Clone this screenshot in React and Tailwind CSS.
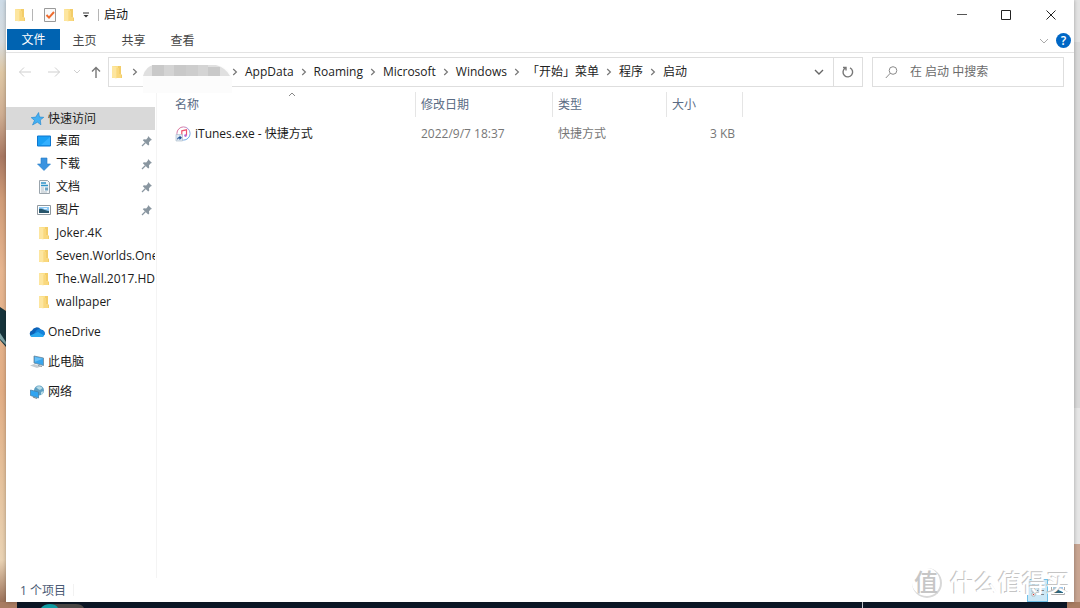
import React from 'react';

const Chevron = ({ className = '' }) => (
  <svg viewBox="0 0 6 8" className={`w-[6px] h-2 shrink-0 ${className}`} fill="none" stroke="#777" strokeWidth="1.2">
    <path d="M1.2 1l3.2 3-3.2 3" />
  </svg>
);

const Folder = () => (
  <svg viewBox="0 0 16 16" className="size-4 shrink-0">
    <path d="M3 2h8l1 1v11H3z" fill="#fbdf87" />
    <path d="M9 2h3v8l1 1v3H9z" fill="#f3cd69" />
    <path d="M3 2l4.500 1.200V14.500L3 13.500z" fill="#fde6a0" />
    <path d="M7.500 4H10v6h2v4H7.500z" fill="#f9d87e" />
  </svg>
);

const Star = () => (
  <svg viewBox="0 0 16 16" className="size-4 shrink-0">
    <path d="M9.600 1.500l.9 4.500 4.300.3-3.500 2.700.6 4.800-3.500-2.600L3.500 14l2-4.600L2.200 6.600l4.500-.5z" fill="#45b0f2" stroke="#1f83cc" strokeWidth=".6" />
  </svg>
);

const Desktop = () => (
  <svg viewBox="0 0 16 16" className="size-4 shrink-0">
    <path d="M1.500 3h13v10h-13z" fill="#1aa0f5" stroke="#0f77cf" />
    <path d="M14 4v8H5z" fill="#34b0ff" />
  </svg>
);

const Download = () => (
  <svg viewBox="0 0 16 16" className="size-4 shrink-0">
    <path d="M5 2h6v6h3.5L8 14.5 1.5 8H5z" fill="#3a93e0" stroke="#2478c4" strokeWidth=".6" />
  </svg>
);

const Document = () => (
  <svg viewBox="0 0 16 16" className="size-4 shrink-0">
    <path d="M3.500 1.500h8l2 2v11h-10z" fill="#f3f6f8" stroke="#9aa4ac" />
    <path d="M5 4h5M5 6.500h7" stroke="#2f93c8" strokeWidth="1.400" />
    <path d="M5 9h3M5 11h3M5 13h6" stroke="#b4bfc7" />
    <path d="M9 8.500h3v3H9z" fill="#6fa5c4" />
  </svg>
);

const Picture = () => (
  <svg viewBox="0 0 16 16" className="size-4 shrink-0">
    <path d="M1.500 3.500h13v9h-13z" fill="#fff" stroke="#8f989f" />
    <path d="M3 5h10v6H3z" fill="#8cc8f4" />
    <path d="M3 7c3-1 4 1 10 2v2H3z" fill="#28566c" />
    <path d="M7 6h4v1H8z" fill="#e9f6ff" />
  </svg>
);

const Cloud = () => (
  <svg viewBox="0 0 16 16" className="size-4 shrink-0">
    <path d="M3.600 13A3.300 3.300 0 0 1 3 6.600 5 5 0 0 1 11.800 5.500 4 4 0 0 1 15.500 11z" fill="#0c62b8" />
    <path d="M7 6.800a4 4 0 0 1 5.600-.8 3.600 3.600 0 0 1 .4 7H3.500z" fill="#1484dc" />
    <path d="M1 11.500L9 8l6 3.500a2.500 2.500 0 0 1-2.300 1.500H3.600A3 3 0 0 1 1 11.500z" fill="#29a8ef" />
  </svg>
);

const Computer = () => (
  <svg viewBox="0 0 16 16" className="size-4 shrink-0">
    <path d="M5 2l9.500 2v7.500L5 9z" fill="#3aa5ec" stroke="#6c8798" strokeWidth=".8" />
    <path d="M6 3l8 1.800-8 3z" fill="#69c1f8" />
    <path d="M1 11.500l4-1.500 7 2.500-4 1.500z" fill="#c5ccd1" />
    <path d="M9 11.500l4 1" stroke="#8a959c" />
  </svg>
);

const Network = () => (
  <svg viewBox="0 0 16 16" className="size-4 shrink-0">
    <circle cx="10" cy="6.500" r="5" fill="#5d9fc2" />
    <path d="M7 3c2-1.500 5-1 6.500 1L11 6 9 5zM12 8l2.500-1c0 2-1 3.500-2.500 4.200z" fill="#b7dbe6" />
    <path d="M1.500 6l8 2v6l-8-2.500z" fill="#31a5f1" stroke="#4382ad" strokeWidth=".8" />
    <path d="M4 13l4 1.500" stroke="#7a8a94" strokeWidth="1.200" />
  </svg>
);

const Pin = () => (
  <svg viewBox="0 0 12 12" className="size-3 shrink-0">
    <path d="M7 1l4 4-1.200.3-1.800 2 .2 2.500-1 .8L1.800 5.200l1-1 2.400.2 1.700-1.900z" fill="#8996a0" />
    <path d="M4.500 7.500L1 11" stroke="#8996a0" strokeWidth="1.200" />
  </svg>
);

const ITunes = () => (
  <svg viewBox="0 0 16 16" className="size-4 shrink-0">
    <defs>
      <linearGradient id="ring" x1="0" y1="0" x2="1" y2="1">
        <stop offset="0" stopColor="#f0647e" />
        <stop offset=".5" stopColor="#a99be0" />
        <stop offset="1" stopColor="#4fb4ea" />
      </linearGradient>
    </defs>
    <circle cx="8.500" cy="7.500" r="6.600" fill="#fff" stroke="url(#ring)" />
    <path d="M6.800 10.500V4.800l4.700-1v5.700" fill="none" stroke="#ee5570" strokeWidth="1.200" />
    <circle cx="10.500" cy="9.600" r="1.300" fill="#b56bd8" />
    <path d="M1 8.500h6.500v6.500H1z" fill="#dfe9f2" stroke="#a9bac8" strokeWidth=".6" />
    <path d="M2 14c0-2 1-3 2.500-3V9.500L7 11.800 4.500 14v-1.400C3.500 12.500 2.800 13 2 14z" fill="#1d4f96" />
  </svg>
);

const quickLinks = [
  { icon: Desktop, label: '桌面', pinned: true },
  { icon: Download, label: '下载', pinned: true },
  { icon: Document, label: '文档', pinned: true },
  { icon: Picture, label: '图片', pinned: true },
  { icon: Folder, label: 'Joker.4K' },
  { icon: Folder, label: 'Seven.Worlds.One' },
  { icon: Folder, label: 'The.Wall.2017.HD' },
  { icon: Folder, label: 'wallpaper' },
];

const places = [
  { icon: Cloud, label: 'OneDrive' },
  { icon: Computer, label: '此电脑' },
  { icon: Network, label: '网络' },
];

const crumbs = ['AppData', 'Roaming', 'Microsoft', 'Windows', '「开始」菜单', '程序', '启动'];

const TitleBar = () => (
  <header className="flex h-[29px] items-center pl-[6px]">
    <Folder />
    <span className="ml-1 h-3 w-px bg-[#b5b5b5]" />
    <button aria-label="属性" className="ml-[10px]">
      <svg viewBox="0 0 14 16" className="h-4 w-[14px]">
        <path d="M1.500 1.500h11v13h-11z" fill="#fafafa" stroke="#9a9a9a" />
        <path d="M3.500 8l2.500 2.600L11 5" fill="none" stroke="#ee6b2e" strokeWidth="2" />
      </svg>
    </button>
    <button aria-label="新建文件夹" className="ml-1"><Folder /></button>
    <button aria-label="自定义快速访问工具栏" className="ml-[5px]">
      <svg viewBox="0 0 8 8" className="size-2">
        <path d="M1 2h6" stroke="#333" />
        <path d="M1.500 4h5L4 6.500z" fill="#333" />
      </svg>
    </button>
    <span className="ml-2 h-3 w-px bg-[#b5b5b5]" />
    <h1 className="ml-[5px] flex-1 text-[#111]">启动</h1>
    <div className="flex h-full">
      <button aria-label="最小化" className="flex w-11 items-center justify-center">
        <svg viewBox="0 0 10 10" className="size-[10px]"><path d="M0 4.500h10" stroke="#555" /></svg>
      </button>
      <button aria-label="最大化" className="flex w-11 items-center justify-center">
        <svg viewBox="0 0 10 10" className="size-[10px]"><path d="M.5.5h9v9h-9z" fill="none" stroke="#222" /></svg>
      </button>
      <button aria-label="关闭" className="flex w-[46px] items-center justify-center">
        <svg viewBox="0 0 10 10" className="size-[10px]"><path d="M.5.5l9 9m0-9l-9 9" stroke="#222" /></svg>
      </button>
    </div>
  </header>
);

const Ribbon = () => (
  <nav className="flex h-6 items-start border-b border-[#e3e3e3] pl-px">
    <button className="h-[21px] w-[53px] bg-[#0063b1] pt-px text-white">文件</button>
    <button className="h-[23px] w-[49px] text-[#444]">主页</button>
    <button className="h-[23px] w-[49px] text-[#444]">共享</button>
    <button className="h-[23px] w-[49px] text-[#444]">查看</button>
    <button aria-label="展开功能区" className="ml-auto flex h-[23px] items-center">
      <svg viewBox="0 0 10 6" className="h-[6px] w-[10px]" fill="none" stroke="#aaa"><path d="M1 1l4 4 4-4" /></svg>
    </button>
    <button aria-label="帮助" className="ml-[7px] mr-[3px] flex h-[23px] items-center">
      <span className="flex size-[15px] items-center justify-center rounded-full bg-[#0067c5] text-[12px] leading-none font-semibold text-white">?</span>
    </button>
  </nav>
);

const AddressRow = () => (
  <div className="mt-1 flex h-[30px] items-center pr-[10px]">
    <button aria-label="后退" className="ml-3">
      <svg viewBox="0 0 14 12" className="h-3 w-[14px]" fill="none" stroke="#cfcfcf"><path d="M13 6H1.500M6 1.500L1.500 6 6 10.500" /></svg>
    </button>
    <button aria-label="前进" className="ml-[15px]">
      <svg viewBox="0 0 14 12" className="h-3 w-[14px]" fill="none" stroke="#cfcfcf"><path d="M1 6h11.500M8 1.500L12.500 6 8 10.500" /></svg>
    </button>
    <button aria-label="最近浏览的位置" className="ml-3">
      <svg viewBox="0 0 8 6" className="h-[6px] w-2" fill="none" stroke="#cfcfcf"><path d="M1 1l3 3 3-3" /></svg>
    </button>
    <button aria-label="上移" className="ml-[10px]">
      <svg viewBox="0 0 10 12" className="h-3 w-[10px]" fill="none" stroke="#777" strokeWidth="1.400"><path d="M5 12V1.500M1 5.500l4-4 4 4" /></svg>
    </button>
    <div className="ml-[7px] flex h-full flex-1 items-center border border-[#dedede] text-[#222]">
      <Folder />
      <Chevron className="ml-[7px]" />
      <svg viewBox="0 0 90 36" className="ml-1 h-9 w-[90px] shrink-0 translate-y-[6px]">
        <path d="M1 16Q3 6 12 5h64q12 3 14 14v14H1z" fill="#fcfcfc" />
        <path d="M1 16Q4 6 12 5h62q10 3 14 11H1z" fill="#e0e0e0" />
        <path d="M10 5h12v11H10zM32 5h12v11H32zM66 7h12v9H66z" fill="#c9c9c9" />
        <path d="M22 5h10v11H22zM56 5h10v11H56z" fill="#d4d4d4" />
        <path d="M44 5h12v11H44z" fill="#cdcdcd" />
      </svg>
      <nav aria-label="路径" className="flex items-center">
        {crumbs.map((c) => (
          <span key={c} className="flex items-center">
            <Chevron className="mr-[7px]" />
            <a href="#" className="mr-[7px] whitespace-nowrap">{c}</a>
          </span>
        ))}
      </nav>
      <button aria-label="历史记录" className="ml-auto mr-[9px]">
        <svg viewBox="0 0 10 6" className="h-[6px] w-[10px]" fill="none" stroke="#666" strokeWidth="1.400"><path d="M1 1l4 4 4-4" /></svg>
      </button>
      <button aria-label="刷新" className="flex h-full w-[29px] items-center justify-center border-l border-[#dedede]">
        <svg viewBox="0 0 12 12" className="size-3" fill="none" stroke="#777" strokeWidth="1.400">
          <path d="M8 1.800A4.800 4.800 0 1 1 3 2.200M1 1.500h3v3" />
        </svg>
      </button>
    </div>
    <label className="ml-[9px] flex h-full w-[192px] items-center border border-[#dedede] pl-3">
      <svg viewBox="0 0 13 13" className="size-[13px] shrink-0" fill="none" stroke="#8a8a8a">
        <circle cx="8" cy="4.500" r="3.800" /><path d="M5.300 7.200L.8 12" />
      </svg>
      <input type="search" placeholder="在 启动 中搜索" aria-label="搜索" className="ml-3 w-full min-w-0 outline-none placeholder:text-[#6b6b6b]" />
    </label>
  </div>
);

const Sidebar = () => (
  <aside className="w-[151px] shrink-0 border-r border-[#f4f4f4] pt-5 pr-px text-[#1a1a1a]">
    <a href="#" className="flex h-[23px] items-center gap-[3px] bg-[#d9d9d9] pl-[23px]"><Star />快速访问</a>
    <ul className="-mt-px">
      {quickLinks.map(({ icon: Icon, label, pinned }) => (
        <li key={label}>
          <a href="#" className="flex h-[23px] items-center gap-1 overflow-hidden pl-[30px] whitespace-nowrap">
            <Icon />
            <span className="flex-1">{label}</span>
            {pinned && <span className="mr-[2px]"><Pin /></span>}
          </a>
        </li>
      ))}
    </ul>
    <ul className="mt-[7px] flex flex-col gap-[7px]">
      {places.map(({ icon: Icon, label }) => (
        <li key={label}>
          <a href="#" className="flex h-[23px] items-center gap-[3px] pl-[23px]"><Icon />{label}</a>
        </li>
      ))}
    </ul>
  </aside>
);

const th = 'h-[25px] border-r border-[#e5e5e5] pl-[5px] font-normal text-[#5a6b84]';

const FileList = () => (
  <main className="min-w-0 flex-1 pt-[5px]">
    <table className="w-full table-fixed border-separate border-spacing-0 text-left">
      <colgroup>
        <col className="w-[259px]" />
        <col className="w-[137px]" />
        <col className="w-[114px]" />
        <col className="w-[76px]" />
        <col />
      </colgroup>
      <thead>
        <tr>
          <th className="relative h-[25px] border-r border-[#e5e5e5] pl-[18px] font-normal text-[#5a6b84]">
            名称
            <svg viewBox="0 0 8 5" className="absolute top-0 left-[131px] h-[5px] w-2" fill="none" stroke="#888"><path d="M1 4l3-3 3 3" /></svg>
          </th>
          <th className={th}>修改日期</th>
          <th className={th}>类型</th>
          <th className={th}>大小</th>
          <th aria-label="其他" />
        </tr>
      </thead>
      <tbody className="text-[#777]">
        <tr>
          <td className="h-[34px] pl-[18px] text-[#1a1a1a]">
            <a href="#" className="flex items-center gap-1"><ITunes />iTunes.exe - 快捷方式</a>
          </td>
          <td className="pl-[5px]">2022/9/7 18:37</td>
          <td className="pl-[5px]">快捷方式</td>
          <td className="pr-2 text-right">3 KB</td>
          <td />
        </tr>
      </tbody>
    </table>
  </main>
);

const StatusBar = () => (
  <footer className="flex h-6 items-center pl-[14px] text-[#4a5a74]">
    <span className="pt-[2px]">1 个项目</span>
    <span className="ml-[7px] h-3 w-px bg-[#f2f2f2]" />
    <button aria-label="详细信息" className="ml-auto flex h-[23px] w-[21px] items-center justify-center border border-[#6fc0e8] bg-[#cce8f6]">
      <svg viewBox="0 0 14 14" className="size-[14px]">
        <path d="M1 2h3v3H1zM1 6h3v3H1zM1 10h3v3H1z" fill="#fff" stroke="#999" strokeWidth=".6" />
        <path d="M2 7h1v1H2zM2 11h1v1H2z" fill="#d33" />
        <path d="M6 3.500h3m1 0h3M6 7.500h3m1 0h3M6 11.500h3m1 0h3" stroke="#7b8790" />
      </svg>
    </button>
    <button aria-label="大图标" className="mr-[6px] flex h-[23px] w-5 items-center justify-center">
      <svg viewBox="0 0 14 12" className="h-3 w-[14px]">
        <path d="M.5 1.500h13v9H.5z" fill="#fff" stroke="#aaa" />
        <path d="M2 3h10v6H2z" fill="#9ccbf2" />
        <path d="M2 8l4-3 6 3v1H2z" fill="#2e6478" />
      </svg>
    </button>
  </footer>
);

const Watermark = () => (
  <div aria-hidden="true" className="pointer-events-none absolute right-[10px] bottom-2 z-20 flex items-center gap-2 text-white [text-shadow:-1px_-1px_0_#c4c4c4]">
    <span className="flex size-[30px] items-center justify-center rounded-full border-r-2 border-b-2 border-[#d8d8d8] text-[24px] leading-none font-medium text-[#c6c6c6] [text-shadow:none]">值</span>
    <span className="text-[24px] leading-[34px] font-medium">什么值得买</span>
  </div>
);

const App = () => (
  <div className="relative flex h-screen flex-col overflow-hidden bg-[#dcaa80] font-['Open_Sans','Noto_Sans_CJK_SC',sans-serif] text-[12px] leading-4">
    <div className="flex min-h-0 flex-1">
      <div className="w-[6px] shrink-0">
        <svg viewBox="0 0 6 602" preserveAspectRatio="none" className="h-full w-full">
          <defs>
            <linearGradient id="wood" x1="0" y1="0" x2="0" y2="1">
              <stop offset="0" stopColor="#cddbe7" />
              <stop offset=".07" stopColor="#d8dcde" />
              <stop offset=".12" stopColor="#dfc8a5" />
              <stop offset=".19" stopColor="#cfae92" />
              <stop offset=".26" stopColor="#a87862" />
              <stop offset=".33" stopColor="#d09c78" />
              <stop offset=".45" stopColor="#e7b690" />
              <stop offset=".65" stopColor="#e2ae85" />
              <stop offset=".8" stopColor="#e6c39d" />
              <stop offset=".93" stopColor="#ead3b4" />
              <stop offset="1" stopColor="#9c725a" />
            </linearGradient>
          </defs>
          <path d="M0 0h6v602H0z" fill="url(#wood)" />
          <path d="M0 307l6 4v36l-6-7z" fill="#17343c" />
          <path d="M0 333l6 9v3l-6-6z" fill="#7fa3a5" />
        </svg>
      </div>
      <div className="z-10 flex min-w-0 flex-1 flex-col bg-white shadow-[0_0_4px_rgba(0,0,0,0.3)]">
        <TitleBar />
        <Ribbon />
        <AddressRow />
        <div className="flex min-h-0 flex-1">
          <Sidebar />
          <FileList />
        </div>
        <StatusBar />
      </div>
      <div className="flex w-[6px] shrink-0 flex-col">
        <div className="h-[42px] bg-[#e3e3e3]" />
        <div className="flex-[366] bg-[#d9d9d9]" />
        <div className="flex-[136] bg-[#e6e6e6]" />
        <div className="flex-[58] bg-[#c9a592]" />
      </div>
    </div>
    <div className="flex h-[6px] shrink-0 bg-[#a97c62] pr-[13px] pl-[17px]">
      <div className="flex flex-1 justify-between bg-[#0c1726]">
        <svg viewBox="0 0 45 6" className="ml-[23px] h-[6px] w-[45px]">
          <path d="M8 6q2-4 8-4h20q6 0 8 4z" fill="#4a4846" />
          <path d="M1 6q3-4 9-4t8 4z" fill="#0f9da3" />
        </svg>
        <span className="mr-[204px] w-px bg-[#c5cbd0]" />
      </div>
    </div>
    <Watermark />
  </div>
);

export default App;
